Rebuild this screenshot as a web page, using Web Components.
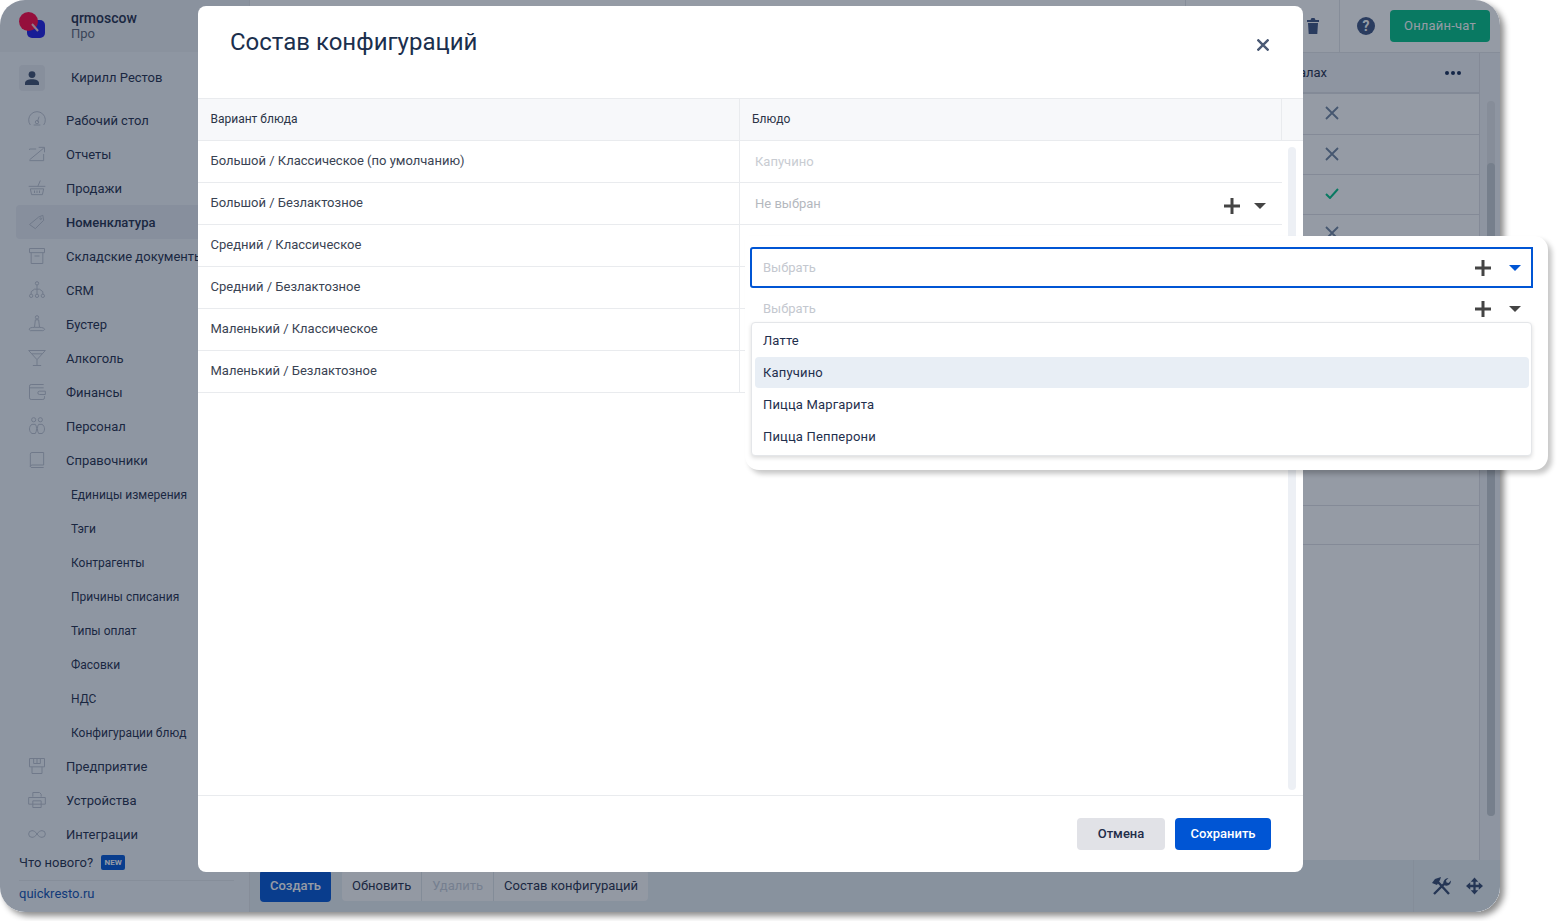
<!DOCTYPE html>
<html lang="ru">
<head>
<meta charset="utf-8">
<title>Состав конфигураций</title>
<style>
  html, body { margin: 0; background: #fff; }
  body { font-family: Roboto, "Liberation Sans", sans-serif; font-size: 13px; color: #1f2d4a; }
</style>
</head>
<body>
<app-stage>
  <app-sidebar slot="sidebar">
    <nav-item icon="gauge">Рабочий стол</nav-item>
    <nav-item icon="chart">Отчеты</nav-item>
    <nav-item icon="basket">Продажи</nav-item>
    <nav-item icon="tag" active>Номенклатура</nav-item>
    <nav-item icon="box">Складские документы</nav-item>
    <nav-item icon="tree">CRM</nav-item>
    <nav-item icon="yoga">Бустер</nav-item>
    <nav-item icon="glass">Алкоголь</nav-item>
    <nav-item icon="wallet">Финансы</nav-item>
    <nav-item icon="people">Персонал</nav-item>
    <nav-item icon="book">Справочники</nav-item>
    <nav-item sub>Единицы измерения</nav-item>
    <nav-item sub>Тэги</nav-item>
    <nav-item sub>Контрагенты</nav-item>
    <nav-item sub>Причины списания</nav-item>
    <nav-item sub>Типы оплат</nav-item>
    <nav-item sub>Фасовки</nav-item>
    <nav-item sub>НДС</nav-item>
    <nav-item sub>Конфигурации блюд</nav-item>
    <nav-item icon="office">Предприятие</nav-item>
    <nav-item icon="printer">Устройства</nav-item>
    <nav-item icon="infinity">Интеграции</nav-item>
  </app-sidebar>
  <app-main slot="main"></app-main>
  <config-dialog slot="dialog">
    <config-row>Большой / Классическое (по умолчанию)<span slot="dish" class="muted">Капучино</span></config-row>
    <config-row actions>Большой / Безлактозное<span slot="dish">Не выбран</span></config-row>
    <config-row>Средний / Классическое</config-row>
    <config-row>Средний / Безлактозное</config-row>
    <config-row>Маленький / Классическое</config-row>
    <config-row>Маленький / Безлактозное</config-row>
  </config-dialog>
  <select-popup slot="popup">
    <select-option>Латте</select-option>
    <select-option active>Капучино</select-option>
    <select-option>Пицца Маргарита</select-option>
    <select-option>Пицца Пепперони</select-option>
  </select-popup>
</app-stage>

<script>
const NAV_ICONS = {
  gauge: '<path d="M4 18a10 10 0 1 1 16 0"/><path d="M12.500 14l2-6"/><circle cx="12" cy="14.500" r="2"/><path d="M8 18h8"/>',
  chart: '<path d="M3 6h8M3 6v1M20 12v8H3"/><path d="M3 19L20 5M14 4h7v6"/>',
  basket: '<path d="M2 10h20M4 13h16l-1.500 7h-13zM13 10l3-7M9 15v3M12 15v3M15 15v3"/>',
  tag: '<path d="M3 15L14 6l5-2 1 6-10 10z"/><circle cx="16.500" cy="8" r="1"/>',
  box: '<path d="M3 3h18v5H3zM5 8v13h14V8M9 12h6"/>',
  tree: '<circle cx="12" cy="4" r="2"/><path d="M12 6v11M5 17v-3l4-3h6l4 3v3"/><circle cx="5" cy="19" r="2"/><circle cx="12" cy="19" r="2"/><circle cx="19" cy="19" r="2"/>',
  yoga: '<circle cx="12" cy="4" r="2"/><path d="M10 7h4l1 9h-6zM9 16c-6 0-8 2-5 4h15c4-1 2-4-4-4"/>',
  glass: '<path d="M2 3h20L12 14zM12 14v7M7 21h10M6 7h12"/>',
  wallet: '<path d="M20 3H5a2 2 0 0 0-2 2v14a2 2 0 0 0 2 2h14a2 2 0 0 0 2-2v-2M3 7h17M22 11h-7a1.500 1.500 0 0 0 0 4h7z"/>',
  people: '<circle cx="8" cy="4.500" r="2.500"/><circle cx="16" cy="4.500" r="2.500"/><path d="M6 10h4c2 2 2 8 0 11H6c-4-2-4-9 0-11zM14 10h4c4 2 4 9 0 11h-4c-2-3-2-9 0-11z"/>',
  book: '<path d="M6 3h14v15H6a2 2 0 0 0-2 2V5a2 2 0 0 1 2-2zM4 20a2 2 0 0 0 2 1h14"/>',
  office: '<path d="M3 3h18v10H3zM6 13v8h12v-8M8 3v6h8V3M12 3v6"/>',
  printer: '<path d="M7 8V3h8l2 2v3M2 9h20v8H2zM7 13h10v8H7z"/>',
  infinity: '<path d="M12 12c-2-3-4-4-6-4a4 4 0 0 0 0 8c2 0 4-1 6-4s4-4 6-4a4 4 0 0 1 0 8c-2 0-4-1-6-4z"/>'
};

const PLUS = '<svg width="16" height="16" viewBox="0 0 16 16"><path d="M8 0v16M0 8h16" stroke="#444" stroke-width="3"/></svg>';
const caret = (color) => `<svg width="12" height="6" viewBox="0 0 12 6"><path d="M0 0h12L6 6z" fill="${color}"/></svg>`;

class AppStage extends HTMLElement {
  constructor() {
    super();
    this.attachShadow({ mode: 'open' });
    this.shadowRoot.innerHTML = `
      <style>
        :host { display: block; position: relative; width: 1557px; height: 921px; overflow: hidden; }
        .window {
          width: 1500px; height: 912px; display: flex; position: relative; overflow: hidden;
          border-radius: 25px; background: #fff;
        }
        .shadow { width: 1500px; height: 912px; border-radius: 25px; box-shadow: 4px 4px 6px rgba(0, 0, 0, .45); }
        .overlay { position: absolute; inset: 0; background: rgba(20, 33, 55, .45); }
      </style>
      <div class="shadow">
        <div class="window">
          <slot name="sidebar"></slot>
          <slot name="main"></slot>
          <div class="overlay"></div>
        </div>
      </div>
      <slot name="dialog"></slot>
      <slot name="popup"></slot>
    `;
  }
}
customElements.define('app-stage', AppStage);

class AppSidebar extends HTMLElement {
  constructor() {
    super();
    this.attachShadow({ mode: 'open' });
    this.shadowRoot.innerHTML = `
      <style>
        :host { display: flex; flex-direction: column; width: 250px; flex: none; height: 100%; background: #f3f6fa; box-sizing: border-box; border-right: 1px solid #e3e6ea; }
        .org { height: 52px; flex: none; box-sizing: border-box; display: flex; align-items: center; background: #eceef2; padding-left: 19px; }
        .logo { width: 52px; flex: none; display: block; }
        .org-text { margin-top: -2px; }
        .org-name { font-weight: 500; font-size: 14px; line-height: 16px; color: #1f2d4a; }
        .org-plan { font-size: 13px; line-height: 15px; color: #5b6475; }
        .user { height: 51px; flex: none; display: flex; align-items: center; padding-left: 19px; font-size: 13px; }
        .avatar { width: 26px; height: 26px; border-radius: 4px; background: #e6e9ef; display: flex; align-items: center; justify-content: center; margin-right: 26px; }
        .news { height: 22px; flex: none; display: flex; align-items: center; padding-left: 19px; gap: 8px; font-size: 13px; }
        .badge { background: #0055d4; color: #fff; font-size: 8px; font-weight: 700; line-height: 15px; height: 15px; width: 24px; text-align: center; border-radius: 2px; }
        .site { margin: 7px 15px 0 19px; border-top: 1px solid #e4e7ec; padding-top: 5px; color: #0e4fb0; font-size: 13px; line-height: 16px; }
      </style>
      <div class="org">
        <svg class="logo" height="28" viewBox="0 0 52 28">
          <rect x="8" y="8" width="18" height="18" rx="5" fill="#1d1be3"/>
          <circle cx="9.500" cy="9.500" r="9.500" fill="#ff0040"/>
          <path d="M13 12l6 7" stroke="#f2c9d4" stroke-width="2"/>
        </svg>
        <div class="org-text">
          <div class="org-name">qrmoscow</div>
          <div class="org-plan">Про</div>
        </div>
      </div>
      <div class="user">
        <div class="avatar">
          <svg width="14" height="14" viewBox="0 0 14 14" fill="#3d4e6c"><circle cx="7" cy="3.600" r="3.400"/><path d="M0 14v-2c0-2.500 3-3.800 7-3.800s7 1.300 7 3.800v2z"/></svg>
        </div>
        Кирилл Рестов
      </div>
      <slot></slot>
      <div class="news">Что нового? <span class="badge">NEW</span></div>
      <div class="site">quickresto.ru</div>
    `;
  }
}
customElements.define('app-sidebar', AppSidebar);

class NavItem extends HTMLElement {
  constructor() {
    super();
    this.attachShadow({ mode: 'open' });
  }
  connectedCallback() {
    const icon = NAV_ICONS[this.getAttribute('icon')] || '';
    this.shadowRoot.innerHTML = `
      <style>
        :host { display: flex; align-items: center; height: 34px; box-sizing: border-box; padding-left: 27px; white-space: nowrap; font-size: 13px; overflow: hidden; }
        :host([sub]) { padding: 1px 0 0 71px; font-size: 12px; }
        :host([active]) { background: #e5e9f0; font-weight: 500; margin-left: 16px; padding-left: 11px; border-radius: 4px 0 0 4px; }
        svg { width: 20px; height: 20px; flex: none; margin-right: 19px; fill: none; stroke: #bcc2ce; stroke-width: 1.200; }
        :host([sub]) svg { display: none; }
      </style>
      <svg viewBox="0 0 24 24">${icon}</svg><slot></slot>
    `;
  }
}
customElements.define('nav-item', NavItem);

class AppMain extends HTMLElement {
  constructor() {
    super();
    this.attachShadow({ mode: 'open' });
    const cross = '<svg width="14" height="14" viewBox="0 0 14 14"><path d="M1 1l12 12M13 1L1 13" stroke="#70849f" stroke-width="1.800"/></svg>';
    const check = '<svg width="14" height="11" viewBox="0 0 14 11"><path d="M1 6l4 4 8-9" fill="none" stroke="#00c285" stroke-width="2"/></svg>';
    this.shadowRoot.innerHTML = `
      <style>
        :host { display: flex; flex-direction: column; flex: 1; min-width: 0; height: 100%; }
        .top { height: 53px; flex: none; box-sizing: border-box; border-bottom: 1px solid #e3e5e9; display: flex; align-items: stretch; justify-content: flex-end; }
        .tool { display: flex; align-items: center; border-left: 1px solid #e3e5e9; }
        .trash { width: 154px; justify-content: flex-end; padding-right: 20px; box-sizing: border-box; }
        .right { width: 161px; padding-left: 17px; box-sizing: border-box; gap: 15px; }
        .help { width: 18px; height: 18px; border-radius: 50%; background: #3d5280; color: #fff; font-weight: 700; font-size: 14px; line-height: 18px; text-align: center; }
        .chat { width: 100px; height: 32px; background: #00c285; color: #fff; border-radius: 4px; line-height: 32px; text-align: center; letter-spacing: .2px; }
        .body { flex: 1; display: flex; min-height: 0; }
        .table { flex: 1; box-sizing: border-box; border-right: 1px solid #e1e1e5; }
        .head { height: 41px; box-sizing: border-box; border-bottom: 2px solid #dfe1e6; background: #f3f4f7; display: flex; align-items: center; justify-content: flex-end; padding-right: 18px; }
        .head span { margin-right: 118px; }
        .dots { display: flex; gap: 2px; }
        .dots i { width: 4px; height: 4px; border-radius: 50%; background: #152a55; }
        .row { height: 40px; box-sizing: border-box; border-bottom: 1px solid #e1e1e5; display: flex; align-items: center; justify-content: flex-end; padding: 0 140px 2px 0; }
        .row.first { height: 41px; }
        .row.hidden { height: 291px; align-items: flex-start; padding-top: 11px; }
        .row.end { height: 39px; }
        .bar { width: 20px; flex: none; background: #f3f4f7; position: relative; }
        .track { position: absolute; left: 7px; top: 48px; width: 8px; height: 715px; background: #e3e5e9; border-radius: 4px; }
        .thumb { position: absolute; left: 0; right: 0; top: 62px; bottom: 0; background: #c6ccd1; border-radius: 4px; }
        .bottom { height: 52px; flex: none; display: flex; align-items: center; background: #e7eef2; padding-left: 10px; }
        .create { width: 71px; height: 32px; background: #0055d4; color: #fff; font-weight: 500; border-radius: 4px; line-height: 32px; text-align: center; margin-right: 11px; }
        .group { display: flex; height: 31px; margin-top: -1px; background: #fbfbfc; border-radius: 4px; }
        .group span { padding: 0 10px; line-height: 31px; border-left: 1px solid #dfe3e8; }
        .group span:first-child { border-left: 0; }
        .group .off { color: #c6cdd8; }
        .tools { margin-left: auto; width: 87px; align-self: stretch; box-sizing: border-box; border-left: 1px solid #e0e6ea; display: flex; align-items: center; padding-left: 17px; gap: 15px; }
      </style>
      <div class="top">
        <div class="tool trash">
          <svg width="12" height="16" viewBox="0 0 12 16" fill="#3d5280"><path d="M0 2h3.500l1-2h3l1 2H12v2H0zM1 5h10l-.7 11H1.700z"/></svg>
        </div>
        <div class="tool right">
          <div class="help">?</div>
          <div class="chat">Онлайн-чат</div>
        </div>
      </div>
      <div class="body">
        <div class="table">
          <div class="head"><span>Отображать в залах</span><div class="dots"><i></i><i></i><i></i></div></div>
          <div class="row first">${cross}</div>
          <div class="row">${cross}</div>
          <div class="row">${check}</div>
          <div class="row hidden">${cross}</div>
          <div class="row end"></div>
        </div>
        <div class="bar"><div class="track"><div class="thumb"></div></div></div>
      </div>
      <div class="bottom">
        <div class="create">Создать</div>
        <div class="group"><span>Обновить</span><span class="off">Удалить</span><span>Состав конфигураций</span></div>
        <div class="tools">
          <svg width="20" height="18" viewBox="0 0 20 18" fill="#33476e">
            <path d="M18 17L7 5M3 17L13 7" fill="none" stroke="#33476e" stroke-width="2.400"/>
            <path d="M1 6l3-4 6-2-1 3-3 5zM12.500 8c-1-3 1-7 5-7l-2.500 2.500.5 2 2 .5 2.500-2.500c0 4-3 6.500-7.500 4.500z"/>
          </svg>
          <svg width="17" height="18" viewBox="0 0 18 18" fill="#33476e">
            <path d="M9 0l4 4.500H5zM9 18l4-4.500H5zM0 9l4.500-4v8zM18 9l-4.500-4v8z"/>
            <path d="M9 3v12M3 9h12" stroke="#33476e" stroke-width="2.400"/>
          </svg>
        </div>
      </div>
    `;
  }
}
customElements.define('app-main', AppMain);

class ConfigDialog extends HTMLElement {
  constructor() {
    super();
    this.attachShadow({ mode: 'open' });
    this.shadowRoot.innerHTML = `
      <style>
        :host { display: flex; flex-direction: column; position: absolute; left: 198px; top: 6px; width: 1105px; height: 866px; background: #fff; border-radius: 8px; overflow: hidden; }
        header { height: 93px; flex: none; box-sizing: border-box; border-bottom: 1px solid #e9ebee; display: flex; justify-content: space-between; padding: 21px 34px 0 32px; }
        h1 { margin: 0; font-size: 24px; font-weight: 400; line-height: 30px; color: #1b2f4d; }
        .close { margin-top: 12px; width: 12px; height: 12px; display: block; }
        .thead { display: grid; grid-template-columns: 542px 542px 21px; height: 42px; flex: none; background: #f7f8fa; box-sizing: border-box; border-bottom: 1px solid #e9ebee; line-height: 41px; font-size: 12px; color: #2b3447; }
        .thead div { box-sizing: border-box; padding-left: 12px; border-right: 1px solid #e9ebee; }
        .thead div:first-child { padding-left: 12.500px; }
        .thead div:last-child { border: 0; }
        .content { flex: 1; display: flex; min-height: 0; }
        .rows { width: 1084px; flex: none; }
        .gutter { flex: 1; padding: 6px 7px 5px 6px; }
        .scroll { height: 100%; width: 8px; background: #edf0f5; border-radius: 4px; }
        footer { height: 77px; flex: none; box-sizing: border-box; border-top: 1px solid #e9ebee; display: flex; justify-content: flex-end; align-items: flex-start; padding: 22px 32px 0 0; gap: 10px; }
        button { font: 500 13px Roboto, "Liberation Sans", sans-serif; height: 32px; border: 0; border-radius: 4px; padding: 0 0 2px; }
        .cancel { width: 88px; background: #e1e2e7; color: #1f2d4a; }
        .save { width: 96px; background: #0055d4; color: #fff; }
      </style>
      <header>
        <h1>Состав конфигураций</h1>
        <svg class="close" viewBox="0 0 12 12"><path d="M.5 .5l11 11M11.500 .5l-11 11" stroke="#4b5a75" stroke-width="2.400"/></svg>
      </header>
      <div class="thead"><div>Вариант блюда</div><div>Блюдо</div><div></div></div>
      <div class="content">
        <div class="rows"><slot></slot></div>
        <div class="gutter"><div class="scroll"></div></div>
      </div>
      <footer>
        <button class="cancel">Отмена</button>
        <button class="save">Сохранить</button>
      </footer>
    `;
  }
}
customElements.define('config-dialog', ConfigDialog);

class ConfigRow extends HTMLElement {
  constructor() {
    super();
    this.attachShadow({ mode: 'open' });
  }
  connectedCallback() {
    const actions = this.hasAttribute('actions');
    this.shadowRoot.innerHTML = `
      <style>
        :host { display: grid; grid-template-columns: 542px 1fr; height: 42px; box-sizing: border-box; border-bottom: 1px solid #e9ebee; font-size: 13px; color: #3a4353; }
        .name { box-sizing: border-box; padding-left: 12.500px; line-height: 40px; border-right: 1px solid #e9ebee; white-space: nowrap; }
        .dish { display: flex; align-items: center; padding: 0 15px; color: #b4b8be; height: 41px; }
        ::slotted(.muted) { color: #c8ccd2; }
        .actions { margin-left: auto; margin-top: 4px; display: flex; align-items: center; gap: 14px; padding-right: 1px; }
      </style>
      <div class="name"><slot></slot></div>
      <div class="dish">
        <slot name="dish"></slot>
        ${actions ? `<div class="actions">${PLUS}${caret('#444')}</div>` : ''}
      </div>
    `;
  }
}
customElements.define('config-row', ConfigRow);

class SelectPopup extends HTMLElement {
  constructor() {
    super();
    this.attachShadow({ mode: 'open' });
    this.shadowRoot.innerHTML = `
      <style>
        :host { display: block; position: absolute; left: 745px; top: 236px; width: 803px; height: 234px; box-sizing: border-box; padding: 11px 15px 0 5px; background: #fff; border-radius: 0 14px 14px 14px; box-shadow: 4px 4px 5px rgba(0, 0, 0, .22); }
        .field { display: flex; align-items: center; box-sizing: border-box; padding-left: 12px; color: #c4c8cf; font-size: 13px; }
        .focus { height: 41px; border: 2px solid #0055d4; border-radius: 3px 0 0 3px; padding-left: 11px; }
        .plain { height: 34px; padding-top: 7px; padding-left: 13px; }
        .actions { margin-left: auto; display: flex; align-items: center; gap: 18px; padding-right: 12px; }
        .focus .actions { padding-right: 10px; }
        .list { margin: 0 1px; height: 134px; box-sizing: border-box; border: 1px solid #e4e6e9; border-radius: 4px; padding: 2px 2px 2px 3px; box-shadow: 0 2px 4px rgba(0, 0, 0, .14); background: #fff; }
      </style>
      <div class="field focus">Выбрать<div class="actions">${PLUS}${caret('#0055d4')}</div></div>
      <div class="field plain">Выбрать<div class="actions">${PLUS}${caret('#444')}</div></div>
      <div class="list"><slot></slot></div>
    `;
  }
}
customElements.define('select-popup', SelectPopup);

class SelectOption extends HTMLElement {
  constructor() {
    super();
    this.attachShadow({ mode: 'open' });
    this.shadowRoot.innerHTML = `
      <style>
        :host { display: block; height: 31px; margin-bottom: 1px; line-height: 31px; padding-left: 8px; border-radius: 4px; font-size: 13px; letter-spacing: .17px; color: #1f2f4d; }
        :host([active]) { background: #e8eef5; }
      </style>
      <slot></slot>
    `;
  }
}
customElements.define('select-option', SelectOption);
</script>
</body>
</html>
